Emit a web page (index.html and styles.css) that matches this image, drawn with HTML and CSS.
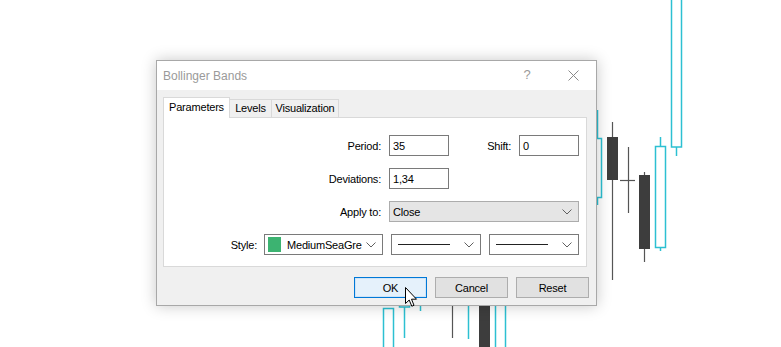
FILE: index.html
```html
<!DOCTYPE html>
<html lang="en">
<head>
  <meta charset="UTF-8">
  <title>Bollinger Bands</title>
  <link rel="stylesheet" href="styles.css">
</head>
<body>
  <!-- chart behind the dialog -->
  <svg class="chart" width="781" height="347" viewBox="0 0 781 347">
    <g class="bull">
      <rect x="592.5" y="138.5" width="9" height="59"/>
      <line x1="597.5" y1="110" x2="597.5" y2="138"/>
      <line x1="597.5" y1="198" x2="597.5" y2="205"/>
      <rect x="671.5" y="-5" width="10" height="152"/>
      <line x1="676.5" y1="147" x2="676.5" y2="156"/>
      <rect x="655.5" y="146.5" width="10" height="101"/>
      <line x1="660.5" y1="137" x2="660.5" y2="146"/>
      <line x1="660.5" y1="248" x2="660.5" y2="251"/>
      <rect x="383.5" y="308.5" width="10" height="50"/>
      <rect x="399.5" y="280" width="10" height="27"/>
      <line x1="404.5" y1="307" x2="404.5" y2="338"/>
      <line x1="420.5" y1="298" x2="420.5" y2="311"/>
      <line x1="468.5" y1="298" x2="468.5" y2="339"/>
      <rect x="495.5" y="290" width="10" height="70"/>
    </g>
    <g class="bear">
      <line x1="612.5" y1="122" x2="612.5" y2="280"/>
      <rect x="607" y="137" width="11" height="43"/>
      <line x1="628.5" y1="147" x2="628.5" y2="213"/>
      <line x1="620" y1="180.5" x2="635" y2="180.5"/>
      <line x1="644.5" y1="172" x2="644.5" y2="262"/>
      <rect x="639" y="175" width="11" height="74"/>
      <line x1="452.5" y1="298" x2="452.5" y2="338"/>
      <rect x="479" y="295" width="11" height="60"/>
    </g>
  </svg>

  <div class="dialog">
    <div class="titlebar">
      <span class="title">Bollinger Bands</span>
      <span class="cap-btn help">?</span>
      <span class="cap-btn close">
        <svg width="11" height="11" viewBox="0 0 11 11"><path d="M0.5 0.5 L10.5 10.5 M10.5 0.5 L0.5 10.5"/></svg>
      </span>
    </div>
    <div class="dialog-body">
      <div class="tabs">
        <div class="tab active">Parameters</div>
        <div class="tab levels">Levels</div>
        <div class="tab">Visualization</div>
      </div>
      <div class="panel">
        <div class="param-grid">
          <label class="lbl">Period:</label>
          <div class="input">35</div>
          <label class="lbl">Shift:</label>
          <div class="input">0</div>

          <label class="lbl">Deviations:</label>
          <div class="input">1,34</div>
          <span></span>
          <span></span>

          <label class="lbl">Apply to:</label>
          <div class="select grey wide">
            <span>Close</span>
            <svg class="chev" width="10" height="6" viewBox="0 0 10 6"><path d="M0.5 0.5 L5 5 L9.5 0.5"/></svg>
          </div>
        </div>
        <div class="style-row">
          <label class="lbl">Style:</label>
          <div class="select color-sel">
            <span class="swatch"></span>
            <span class="sel-text">MediumSeaGre</span>
            <svg class="chev" width="10" height="6" viewBox="0 0 10 6"><path d="M0.5 0.5 L5 5 L9.5 0.5"/></svg>
          </div>
          <div class="select line-sel">
            <span class="line"></span>
            <svg class="chev" width="10" height="6" viewBox="0 0 10 6"><path d="M0.5 0.5 L5 5 L9.5 0.5"/></svg>
          </div>
          <div class="select line-sel">
            <span class="line"></span>
            <svg class="chev" width="10" height="6" viewBox="0 0 10 6"><path d="M0.5 0.5 L5 5 L9.5 0.5"/></svg>
          </div>
        </div>
      </div>
      <div class="buttons">
        <button class="btn default">OK</button>
        <button class="btn">Cancel</button>
        <button class="btn">Reset</button>
      </div>
    </div>
  </div>

  <svg class="cursor" width="14" height="21" viewBox="0 0 14 21">
    <path d="M0.5 0.5 V16.5 L4.2 13 L6.8 19.2 L9 18.3 L6.5 12.2 H11.5 Z"/>
  </svg>
</body>
</html>
```

FILE: styles.css
```css
html, body {
  margin: 0;
  padding: 0;
  width: 100%;
  height: 100%;
  overflow: hidden;
  background: #fff;
}
body {
  position: relative;
  font-family: "Liberation Sans", Arial, sans-serif;
  font-size: 11px;
  letter-spacing: -0.2px;
  color: #000;
}
.chart {
  position: absolute;
  top: 0;
  left: 0;
  display: block;
}
.chart .bull rect {
  fill: #fff;
  stroke: #2cc0d2;
  stroke-width: 1.5;
}
.chart .bull line {
  stroke: #2cc0d2;
  stroke-width: 1.5;
}
.chart .bear rect {
  fill: #3d3d3d;
}
.chart .bear line {
  stroke: #555;
  stroke-width: 1.2;
}

/* dialog window */
.dialog {
  position: absolute;
  left: 156px;
  top: 60px;
  width: 441px;
  box-sizing: border-box;
  border: 1px solid #a8a8a8;
  background: #f0f0f0;
  box-shadow: 0 0 14px rgba(0,0,0,0.22);
}
.titlebar {
  height: 29px;
  background: #fff;
  display: flex;
  align-items: center;
  padding-left: 6px;
}
.title {
  flex: 1;
  font-size: 12px;
  letter-spacing: 0;
  color: #9a9a9a;
  padding-top: 1px;
}
.cap-btn {
  width: 46px;
  height: 29px;
  display: flex;
  align-items: center;
  justify-content: center;
  color: #9a9a9a;
}
.help {
  font-size: 13px;
  padding-bottom: 2px;
  box-sizing: border-box;
}
.close svg path {
  stroke: #8a8a8a;
  stroke-width: 1;
  fill: none;
}
.dialog-body {
  padding: 7px 7px 7px 6px;
}

/* tabs */
.tabs {
  display: flex;
  align-items: flex-end;
  height: 20px;
  position: relative;
  z-index: 1;
}
.tab {
  width: 68px;
  height: 18px;
  box-sizing: border-box;
  border: 1px solid #d9d9d9;
  border-bottom: none;
  background: #f0f0f0;
  line-height: 17px;
  text-align: center;
  margin-left: -1px;
}
.tab.levels {
  width: 43px;
}
.tab.active {
  width: 67px;
  height: 21px;
  margin-bottom: -1px;
  margin-left: 0;
  background: #fff;
  line-height: 18px;
}

.panel {
  background: #fff;
  border: 1px solid #d9d9d9;
  margin-right: 2px;
  height: 150px;
  box-sizing: border-box;
  padding: 17px 7px 0 0;
}
.param-grid {
  display: grid;
  grid-template-columns: 1fr 60px 54px 60px;
  column-gap: 8px;
  row-gap: 12px;
  grid-auto-rows: 21px;
}
.lbl {
  display: flex;
  align-items: center;
  justify-content: flex-end;
}
.input {
  box-sizing: border-box;
  border: 1px solid #7a7a7a;
  background: #fff;
  padding: 0 3px;
  display: flex;
  align-items: center;
}
.select {
  box-sizing: border-box;
  height: 21px;
  border: 1px solid #7a7a7a;
  background: #fff;
  display: flex;
  align-items: center;
  padding: 0 6px 0 3px;
}
.select.grey {
  background: #e5e5e5;
  border-color: #acacac;
}
.select.wide {
  grid-column: 2 / 5;
  justify-content: space-between;
}
.chev path {
  fill: none;
  stroke: #606060;
  stroke-width: 1;
}
.style-row {
  display: flex;
  justify-content: flex-end;
  margin-top: 12px;
  height: 21px;
}
.style-row .lbl {
  margin-right: 7px;
}
.color-sel {
  width: 119px;
  margin-right: 8px;
}
.swatch {
  width: 13px;
  height: 15px;
  background: #3cb371;
  margin-right: 6px;
}
.sel-text {
  flex: 1;
}
.line-sel {
  width: 90px;
  padding-left: 6px;
}
.line-sel + .line-sel {
  margin-left: 8px;
}
.line {
  flex: 1;
  height: 1px;
  background: #222;
  margin-right: 14px;
}

/* bottom buttons */
.buttons {
  display: flex;
  justify-content: flex-end;
  gap: 8px;
  margin-top: 10px;
}
.btn {
  width: 73px;
  height: 21px;
  box-sizing: border-box;
  border: 1px solid #adadad;
  background: #e1e1e1;
  font-family: inherit;
  font-size: inherit;
  letter-spacing: inherit;
  color: #000;
  padding: 0;
}
.btn.default {
  border-color: #0078d7;
  background: #e5f1fb;
  box-shadow: inset 0 0 0 1px #cfe4f7;
}

.cursor {
  position: absolute;
  left: 405px;
  top: 287px;
}
.cursor path {
  fill: #fff;
  stroke: #000;
  stroke-width: 1;
  stroke-linejoin: miter;
}
```
